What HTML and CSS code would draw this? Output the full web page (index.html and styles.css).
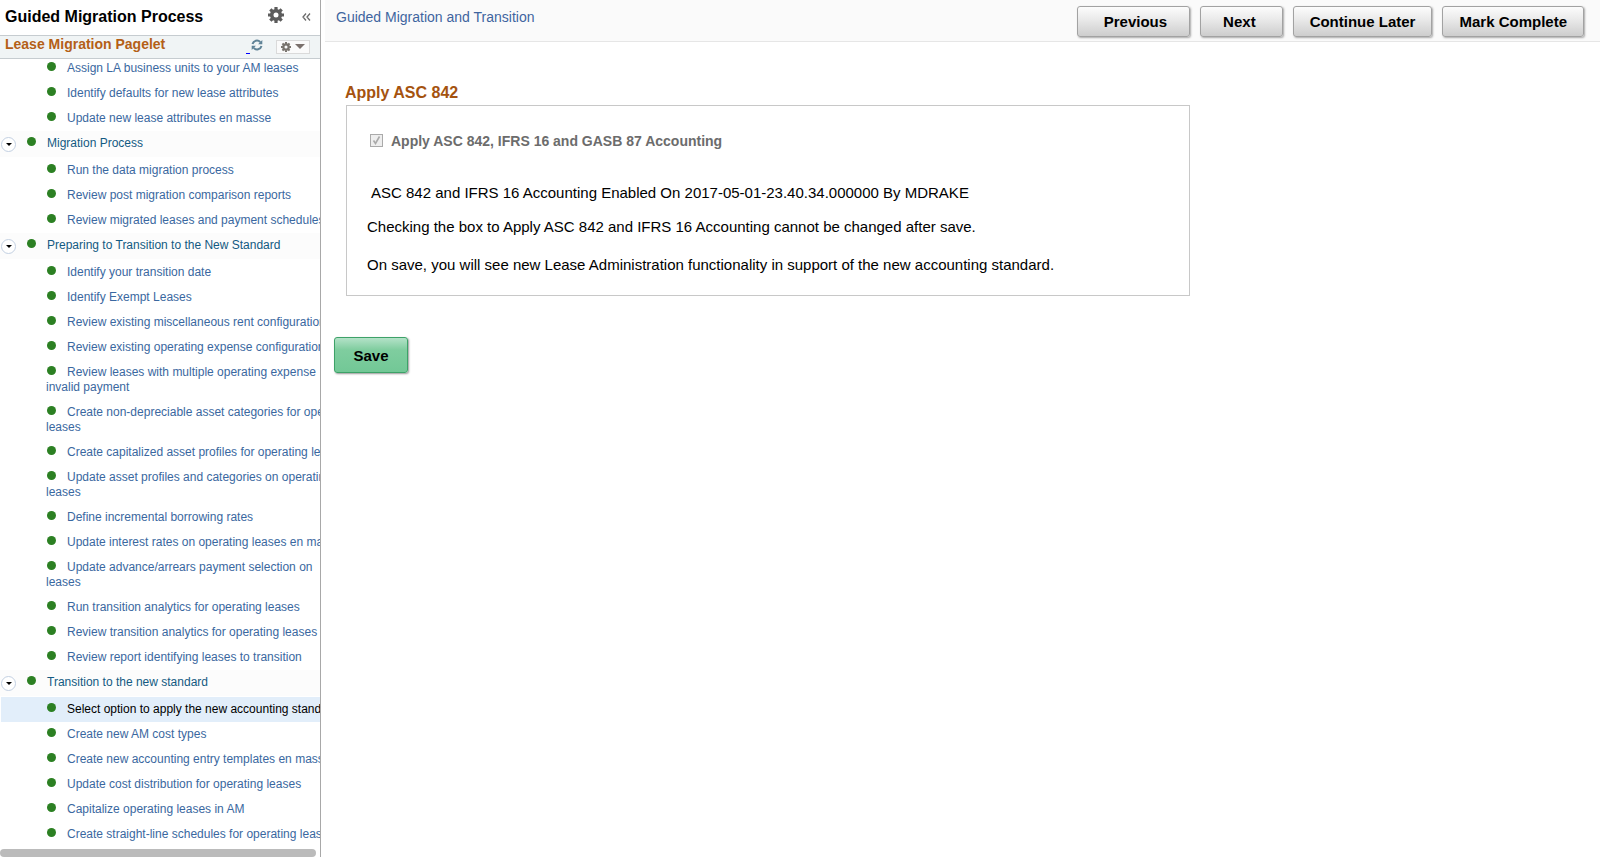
FILE: index.html
```html
<!DOCTYPE html>
<html lang="en">
<head>
<meta charset="utf-8">
<title>Guided Migration and Transition</title>
<link rel="stylesheet" href="styles.css">
</head>
<body>
<svg class="defs" aria-hidden="true">
  <symbol id="gear" viewBox="0 0 16 16">
    <circle cx="8" cy="8" r="4.3" fill="none" stroke="currentColor" stroke-width="3.6"/>
    <g stroke="currentColor" stroke-width="3.2">
      <path d="M8 0v3M8 13v3M0 8h3M13 8h3M2.3 2.3l2.2 2.2M11.5 11.5l2.2 2.2M2.3 13.7l2.2-2.2M11.5 4.5l2.2-2.2"/>
    </g>
  </symbol>
</svg>
<div class="app">
  <aside class="sidebar">
    <header class="side-head">
      <h1 class="side-title">Guided Migration Process</h1>
      <button class="icon-btn gear-btn" type="button" aria-label="Settings"><svg width="16" height="16"><use href="#gear"/></svg></button>
      <button class="icon-btn collapse-btn" type="button" aria-label="Collapse"><svg width="9" height="8" viewBox="0 0 9 8" fill="none" stroke="currentColor" stroke-width="1.3"><path d="M4 .5L1 4l3 3.500M8 .5L5 4l3 3.500"/></svg></button>
    </header>
    <div class="pagelet-head">
      <h2 class="pagelet-title">Lease Migration Pagelet</h2>
      <a class="refresh" href="#" aria-label="Refresh"><span class="refresh-line"></span><svg width="12" height="12" viewBox="0 0 12 12"><path d="M1.500 5A4.500 4.500 0 0 1 9.300 3.200M10.500 7A4.500 4.500 0 0 1 2.700 8.800" fill="none" stroke="currentColor" stroke-width="2"/><path d="M11.300 1v4.200H7.100zM.7 11V6.800h4.200z" fill="currentColor"/></svg></a>
      <button class="menu-btn" type="button" aria-label="Pagelet actions"><svg width="10" height="10"><use href="#gear"/></svg><span class="caret"></span></button>
    </div>
    <nav class="tree">
      <ul class="list">
        <li class="leaf cut"><a href="#">Assign LA business units to your AM leases</a></li>
        <li class="leaf"><a href="#">Identify defaults for new lease attributes</a></li>
        <li class="leaf"><a href="#">Update new lease attributes en masse</a></li>
        <li class="section"><button class="toggle" type="button" aria-label="Collapse section"></button><a href="#">Migration Process</a></li>
        <li class="leaf"><a href="#">Run the data migration process</a></li>
        <li class="leaf"><a href="#">Review post migration comparison reports</a></li>
        <li class="leaf"><a href="#">Review migrated leases and payment schedules</a></li>
        <li class="section"><button class="toggle" type="button" aria-label="Collapse section"></button><a href="#">Preparing to Transition to the New Standard</a></li>
        <li class="leaf"><a href="#">Identify your transition date</a></li>
        <li class="leaf"><a href="#">Identify Exempt Leases</a></li>
        <li class="leaf"><a href="#">Review existing miscellaneous rent configuration</a></li>
        <li class="leaf"><a href="#">Review existing operating expense configuration</a></li>
        <li class="leaf"><a href="#">Review leases with multiple operating expense<br>invalid payment</a></li>
        <li class="leaf"><a href="#">Create non-depreciable asset categories for operating<br>leases</a></li>
        <li class="leaf"><a href="#">Create capitalized asset profiles for operating leases</a></li>
        <li class="leaf"><a href="#">Update asset profiles and categories on operating<br>leases</a></li>
        <li class="leaf"><a href="#">Define incremental borrowing rates</a></li>
        <li class="leaf"><a href="#">Update interest rates on operating leases en masse</a></li>
        <li class="leaf"><a href="#">Update advance/arrears payment selection on<br>leases</a></li>
        <li class="leaf"><a href="#">Run transition analytics for operating leases</a></li>
        <li class="leaf"><a href="#">Review transition analytics for operating leases</a></li>
        <li class="leaf"><a href="#">Review report identifying leases to transition</a></li>
        <li class="section"><button class="toggle" type="button" aria-label="Collapse section"></button><a href="#">Transition to the new standard</a></li>
        <li class="leaf selected"><a href="#" aria-current="page">Select option to apply the new accounting standard</a></li>
        <li class="leaf"><a href="#">Create new AM cost types</a></li>
        <li class="leaf"><a href="#">Create new accounting entry templates en masse</a></li>
        <li class="leaf"><a href="#">Update cost distribution for operating leases</a></li>
        <li class="leaf"><a href="#">Capitalize operating leases in AM</a></li>
        <li class="leaf"><a href="#">Create straight-line schedules for operating leases</a></li>
      </ul>
    </nav>
    <div class="scrollbar"></div>
  </aside>
  <main class="main">
    <header class="topbar">
      <a class="crumb" href="#">Guided Migration and Transition</a>
      <div class="actions">
        <button class="btn btn-prev" type="button">Previous</button>
        <button class="btn btn-next" type="button">Next</button>
        <button class="btn" type="button">Continue Later</button>
        <button class="btn" type="button">Mark Complete</button>
      </div>
    </header>
    <form class="content">
      <h2 class="group-title">Apply ASC 842</h2>
      <section class="panel">
        <div class="option">
          <input class="check" type="checkbox" id="apply" checked disabled>
          <label for="apply">Apply ASC 842, IFRS 16 and GASB 87 Accounting</label>
        </div>
        <p class="status">ASC 842 and IFRS 16 Accounting Enabled On 2017-05-01-23.40.34.000000 By MDRAKE</p>
        <p class="note">Checking the box to Apply ASC 842 and IFRS 16 Accounting cannot be changed after save.</p>
        <p class="note">On save, you will see new Lease Administration functionality in support of the new accounting standard.</p>
      </section>
      <button class="save" type="button">Save</button>
    </form>
  </main>
</div>
</body>
</html>
```
FILE: styles.css
```css
* { box-sizing: border-box; }
body {
  margin: 0;
  background: #fff;
  color: #000;
  font-family: "Liberation Sans", Arial, sans-serif;
  font-size: 15px;
}
h1, h2, p, ul { margin: 0; padding: 0; }
a { text-decoration: none; }
button { font-family: inherit; padding: 0; }
svg { display: block; }
.defs { position: absolute; width: 0; height: 0; }

.app { display: flex; height: 100vh; overflow: hidden; }

/* Sidebar */
.sidebar {
  display: flex;
  flex-direction: column;
  flex: none;
  width: 321px;
  border-right: 1px solid #a8a8a8;
  overflow: hidden;
}
.side-head {
  display: flex;
  align-items: center;
  height: 36px;
  padding: 0 9px 1px 5px;
  border-bottom: 1px solid #c6ccd0;
}
.side-title { flex: 1; font-size: 16px; line-height: 20px; white-space: nowrap; }
.icon-btn { border: 0; background: none; }
.gear-btn { margin: 0 18px 4px 0; color: #5c5c5c; }
.collapse-btn { color: #6a6a6a; }

.pagelet-head {
  display: flex;
  align-items: center;
  height: 23px;
  padding: 0 10px 0 5px;
  background: #f0f4f5;
  border-bottom: 1px solid #c6ccd0;
}
.pagelet-title {
  flex: 1;
  padding-bottom: 5px;
  color: #b45f17;
  font-size: 14px;
  line-height: 17px;
}
.refresh { display: flex; align-items: flex-end; gap: 1px; margin: 0 13px 2px 0; color: #5f8296; }
.refresh svg { margin-bottom: 3px; }
.refresh-line { width: 4px; height: 1px; background: #00f; }
.menu-btn {
  display: flex;
  align-items: center;
  gap: 4px;
  height: 14px;
  margin-bottom: 1px;
  padding: 0 4px;
  border: 1px solid #dadada;
  background: #fafafa;
  color: #78736d;
}
.caret { border: 5px solid transparent; border-top-color: #7a706c; border-bottom: 0; }

.tree { flex: 1; min-height: 0; overflow: hidden; }
.list { list-style: none; font-size: 12px; line-height: 15px; white-space: nowrap; }
.leaf { padding: 5px 0 5px 46px; }
.leaf.cut { padding-top: 2px; }
.leaf a { color: #3a68a0; }
.leaf a::before, .section a::before {
  content: "";
  display: inline-block;
  width: 9px;
  height: 9px;
  margin: 0 11px 0 1px;
  border-radius: 50%;
  background: #2c8023;
  vertical-align: 1px;
}
.selected { margin-left: 1px; padding-left: 45px; background: #e2eefa; }
.leaf.selected a { color: #000; }
.section {
  display: flex;
  align-items: flex-start;
  height: 27px;
  padding: 5px 0 0 1px;
  background: linear-gradient(#fcfcfc, #fcfcfc) 0 0 / 100% 26px no-repeat;
}
.section a { color: #135a82; }
.toggle {
  display: flex;
  align-items: center;
  justify-content: center;
  width: 15px;
  height: 15px;
  margin: 1px 10px 0 0;
  border: 1px solid #c3d0e2;
  border-radius: 50%;
  background: #fff;
}
.toggle::before {
  content: "";
  border: 3px solid transparent;
  border-top-color: #000;
  border-bottom: 0;
}
.scrollbar { flex: none; height: 8px; margin-right: 4px; border-radius: 4px; background: #bbb; }

/* Main column */
.main { flex: 1; min-width: 0; padding-left: 4px; }
.topbar {
  display: flex;
  justify-content: space-between;
  align-items: flex-start;
  height: 42px;
  padding: 6px 16px 0 11px;
  background: #fafafa;
  border-bottom: 1px solid #e6e6e6;
}
.crumb { color: #3f659f; font-size: 14px; line-height: 22px; }
.actions { display: flex; gap: 10px; }
.btn {
  height: 31px;
  padding: 0 16px;
  border: 1px solid #a2a2a2;
  border-radius: 3px;
  background: linear-gradient(#fcfcfc, #ebebeb 40%, #cdcdcd);
  box-shadow: 1px 1px 2px #aaa;
  color: #000;
  font-size: 15px;
  font-weight: bold;
}
.btn-prev { padding: 0 22px 0 26px; }
.btn-next { padding: 0 26px 0 22px; }

.content { padding: 41px 9px 0; }
.group-title { padding-left: 11px; color: #a5530f; font-size: 16px; line-height: 20px; }
.panel {
  max-width: 844px;
  margin: 2px 0 41px 12px;
  padding: 26px 20px 21px;
  border: 1px solid #c8c8c8;
  line-height: 18px;
}
.option { display: flex; align-items: center; gap: 8px; padding-left: 3px; color: #6c6c6c; font-size: 14px; font-weight: bold; }
.check {
  appearance: none;
  width: 13px;
  height: 13px;
  margin: 0 0 2px;
  border: 1px solid #aaa;
  background: #eee url("data:image/svg+xml,%3Csvg xmlns='http://www.w3.org/2000/svg' viewBox='0 0 11 11'%3E%3Cpath d='M2.500 5.500L4.500 8.500L8.500 1.500' fill='none' stroke='%23aaa' stroke-width='1.600'/%3E%3C/svg%3E");
}
.status { margin: 34px 0 16px; padding-left: 4px; }
.note + .note { margin-top: 20px; }
.save {
  width: 74px;
  height: 36px;
  border: 1px solid #3da268;
  border-radius: 3px;
  background: linear-gradient(#b4e2c8, #7fcd9f 35%, #72c896);
  box-shadow: 1px 1px 2px #999;
  color: #000;
  font-size: 15px;
  font-weight: bold;
}
```
